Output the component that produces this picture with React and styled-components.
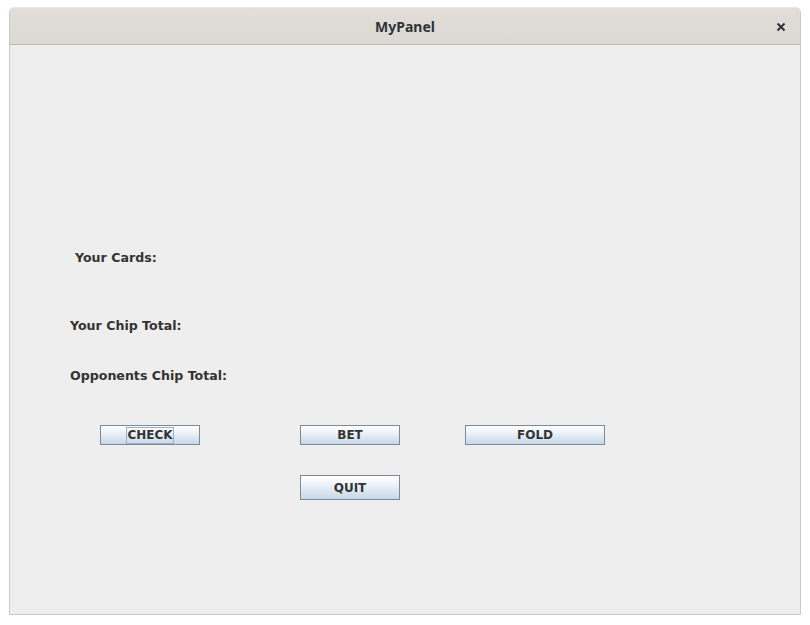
import React from "react";
import styled, { createGlobalStyle } from "styled-components";

const Global = createGlobalStyle`
  html, body { margin: 0; padding: 0; background: #ffffff; }
  body { font-family: "DejaVu Sans", sans-serif; }
`;

const Window = styled.div`
  margin: 7px 0 0 9px;
  width: 792px;
  height: 608px;
  box-sizing: border-box;
  border: 1px solid #c9c9c9;
  border-top: none;
  border-radius: 6px 6px 0 0;
  background: #eeeeee;
  display: flex;
  flex-direction: column;
  overflow: hidden;
`;

const TitleBar = styled.div`
  height: 38px;
  box-sizing: border-box;
  background: linear-gradient(#e1deda, #dcd8d4);
  border-top: 1px solid #ebe9e6;
  border-bottom: 1px solid #bfb8b0;
  display: flex;
  align-items: center;
  justify-content: center;
  position: relative;
`;

const Title = styled.span`
  font-family: "Noto Sans", sans-serif;
  font-weight: bold;
  font-size: 14px;
  color: #2e3436;
`;

const CloseBtn = styled.div`
  position: absolute;
  right: 14px;
  top: 14px;
  width: 10px;
  height: 10px;
  display: flex;
`;

const Content = styled.div`
  flex: 1;
  display: flex;
  flex-direction: column;
`;

const Label = styled.div`
  font-family: "DejaVu Sans", sans-serif;
  font-weight: bold;
  font-size: 12.6px;
  line-height: 16px;
  color: #333333;
  margin-top: ${(p) => p.$mt}px;
  padding-left: ${(p) => p.$pl}px;
`;

const Row = styled.div`
  display: flex;
  margin-top: ${(p) => p.$mt}px;
  padding-left: ${(p) => p.$pl}px;
`;

const Button = styled.button`
  box-sizing: border-box;
  width: ${(p) => p.$w}px;
  height: ${(p) => p.$h}px;
  margin-left: ${(p) => p.$ml || 0}px;
  padding: 0;
  border: 1px solid #7a8a99;
  border-radius: 0;
  background: linear-gradient(#ffffff 0%, #f2f6fb 30%, #dfe8f2 60%, #c8d7e8 100%);
  font-family: "DejaVu Sans", sans-serif;
  font-weight: bold;
  font-size: 12px;
  color: #333333;
  display: flex;
  align-items: center;
  justify-content: center;
`;

const Focus = styled.span`
  border: 1px solid #9cb0c6;
  line-height: 15px;
`;

export default function App() {
  return (
    <>
      <Global />
      <Window>
        <TitleBar>
          <Title>MyPanel</Title>
          <CloseBtn>
            <svg width="10" height="10" viewBox="0 0 10 10">
              <path d="M1.5 1.5 L8.5 8.5 M8.5 1.5 L1.5 8.5" stroke="#2e3436" strokeWidth="2" />
            </svg>
          </CloseBtn>
        </TitleBar>
        <Content>
          <Label $mt={205} $pl={65}>Your Cards:</Label>
          <Label $mt={52} $pl={60}>Your Chip Total:</Label>
          <Label $mt={34} $pl={60}>Opponents Chip Total:</Label>
          <Row $mt={41} $pl={90}>
            <Button $w={100} $h={20}><Focus>CHECK</Focus></Button>
            <Button $w={100} $h={20} $ml={100}>BET</Button>
            <Button $w={140} $h={20} $ml={65}>FOLD</Button>
          </Row>
          <Row $mt={30} $pl={290}>
            <Button $w={100} $h={25}>QUIT</Button>
          </Row>
        </Content>
      </Window>
    </>
  );
}
